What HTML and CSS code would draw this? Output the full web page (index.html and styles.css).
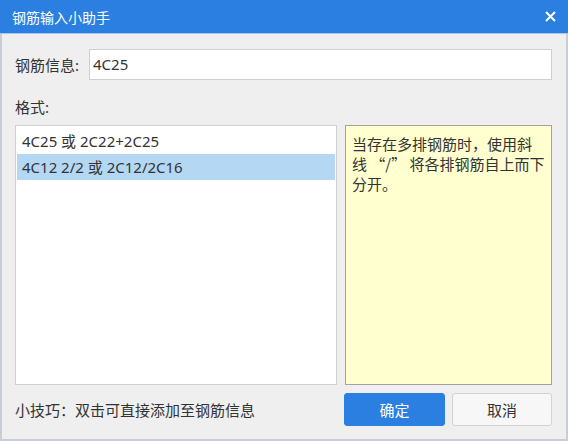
FILE: index.html
```html
<!DOCTYPE html>
<html lang="zh-cn">
  <head>
    <meta charset="UTF-8" />
    <title>钢筋输入小助手</title>
    <link rel="stylesheet" href="styles.css">
  </head>

  <body>
    <div class="dialog">
      <div class="title-bar">
        <span class="title">钢筋输入小助手</span>
        <span class="close">
          <svg width="11" height="11" viewBox="0 0 11 11">
            <path d="M1 1L10 10M10 1L1 10" stroke="#fff" stroke-width="2" />
          </svg>
        </span>
      </div>

      <div class="body">
        <div class="field">
          <label>钢筋信息:</label>
          <div class="input">4C25</div>
        </div>

        <div class="caption">格式:</div>

        <div class="panes">
          <ul class="list">
            <li>4C25 或 2C22+2C25</li>
            <li class="selected">4C12 2/2 或 2C12/2C16</li>
          </ul>
          <div class="hint">当存在多排钢筋时，使用斜线 “/” 将各排钢筋自上而下分开。</div>
        </div>

        <div class="footer">
          <span class="tip">小技巧：双击可直接添加至钢筋信息</span>
          <div class="buttons">
            <button class="btn primary">确定</button>
            <button class="btn">取消</button>
          </div>
        </div>
      </div>
    </div>
  </body>
</html>
```

FILE: styles.css
```css
html,
body {
  margin: 0;
  padding: 0;
}

body {
  font-family: "Noto Sans", "Noto Sans CJK SC", sans-serif;
  font-size: 15px;
  color: #333;
}

.dialog {
  width: 568px;
  height: 441px;
  box-sizing: border-box;
  border: 2px solid #c9ced6;
  border-top: 0;
  background-color: #efefef;
  display: flex;
  flex-direction: column;
}

.title-bar {
  height: 33px;
  margin: 0 -2px;
  padding: 0 12px 0 12px;
  background-color: #2b7fe0;
  border-bottom: 1px solid #a9c4e8;
  display: flex;
  align-items: center;
  justify-content: space-between;
  color: #fff;
}

.title {
  font-size: 14px;
}

.close {
  display: flex;
  width: 11px;
  height: 11px;
}

.body {
  flex: 1;
  padding: 15px 14px 12px 13px;
  display: flex;
  flex-direction: column;
}

.field {
  display: flex;
  align-items: center;
  gap: 10px;
}

.input {
  flex: 1;
  height: 31px;
  box-sizing: border-box;
  border: 1px solid #cfcfcf;
  background-color: #fff;
  padding: 0 3px;
  line-height: 29px;
}

.caption {
  margin-top: 17px;
  line-height: 20px;
}

.panes {
  margin-top: 8px;
  display: flex;
  gap: 8px;
  height: 260px;
}

.list {
  width: 322px;
  margin: 0;
  padding: 2px 1px;
  list-style: none;
  box-sizing: border-box;
  border: 1px solid #cfcfcf;
  background-color: #fff;
}

.list li {
  height: 26px;
  line-height: 26px;
  padding: 0 5px;
}

.list .selected {
  background-color: #b4d8f4;
}

/* 提示全是中文，引号用全角字形 */
.hint {
  flex: 1;
  box-sizing: border-box;
  border: 1px solid #a3a3a3;
  background-color: #ffffcf;
  padding: 8px 6px 0;
  line-height: 20px;
  font-family: "Noto Sans CJK SC", sans-serif;
}

.footer {
  margin-top: 8px;
  display: flex;
  align-items: center;
  justify-content: space-between;
}

.buttons {
  display: flex;
  gap: 7px;
}

.btn {
  width: 100px;
  height: 33px;
  font-family: inherit;
  font-size: 15px;
  color: #333;
  border: 1px solid #d3d3d3;
  border-radius: 3px;
  background-color: #f7f7f7;
}

.btn.primary {
  width: 101px;
  border-color: #2b7fe0;
  background-color: #2b7fe0;
  color: #fff;
}
```
